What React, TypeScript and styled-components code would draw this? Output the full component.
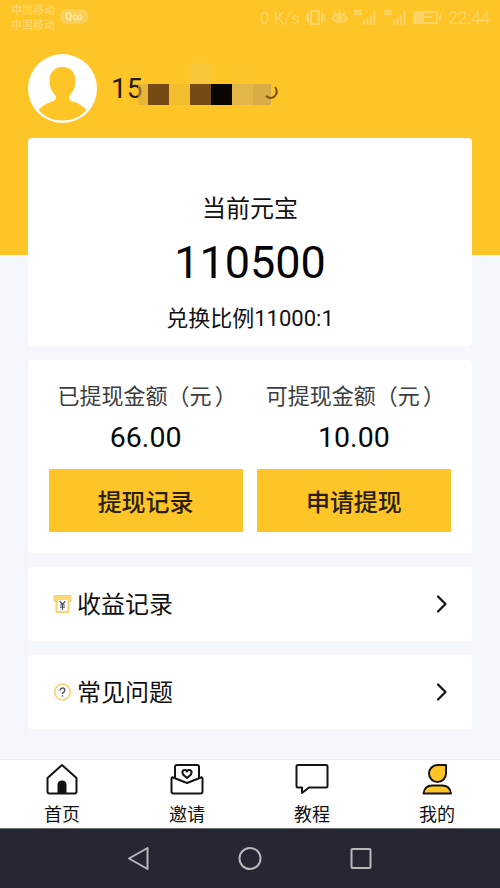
import React from "react";
import styled, { createGlobalStyle, css } from "styled-components";

const YELLOW = "#ffc425";
const PALE = "#fbd468";

const GlobalStyle = createGlobalStyle`
  * { box-sizing: border-box; }
  body {
    margin: 0;
    background: #f4f7fc;
    font-family: Roboto, "Noto Sans CJK SC", sans-serif;
    color: #111;
  }
`;

const Screen = styled.div`
  width: 500px;
  height: 888px;
  display: flex;
  flex-direction: column;
  overflow: hidden;
  background: linear-gradient(${YELLOW} 0 255px, #f4f7fc 255px);
`;

const StatusBar = styled.div`
  height: 36px;
  flex: none;
  display: flex;
  align-items: center;
  justify-content: space-between;
  padding: 0 10px 1px 11px;
  color: ${PALE};
`;

const StatusGroup = styled.div<{ $gap: number }>`
  display: flex;
  align-items: center;
  gap: ${(p) => p.$gap}px;
  filter: blur(0.7px);
`;

const Carriers = styled.div`
  font-size: 11px;
  font-weight: 700;
  line-height: 15px;
  white-space: nowrap;
`;

const CarrierPill = styled.span`
  width: 28px;
  height: 15px;
  margin: 0 0 3px -3px;
  border-radius: 7px;
  background: #fbd05a;
  color: #ffe9ab;
  font-size: 10px;
  font-weight: 700;
  line-height: 15px;
  text-align: center;
`;

const StatusText = styled.span<{ $spacing: number; $size: number }>`
  font-size: ${(p) => p.$size}px;
  line-height: 18px;
  letter-spacing: ${(p) => p.$spacing}px;
  white-space: nowrap;
`;

const Profile = styled.div`
  height: 102px;
  flex: none;
  display: flex;
  align-items: flex-start;
  padding: 17px 28px 0 27px;
`;

const Account = styled.div`
  display: flex;
  align-items: flex-end;
  height: 52px;
  margin-left: 13px;
`;

const Phone = styled.span`
  width: 27px;
  font-size: 28px;
  line-height: 32px;
  white-space: nowrap;
  color: #231a08;
`;

const Mosaic = styled.svg`
  width: 143px;
  height: 42px;
  position: relative;
`;

const Content = styled.main`
  flex: 1;
  display: flex;
  flex-direction: column;
  padding: 0 28px;
`;

const Card = styled.section`
  background: #fff;
  border-radius: 4px;
  margin-bottom: 14px;
  flex: none;
`;

const BalanceCard = styled(Card)`
  height: 207.5px;
  padding-top: 53px;
  display: flex;
  flex-direction: column;
  align-items: center;
`;

const BalanceTitle = styled.div`
  font-size: 24px;
  line-height: 36px;
`;

const BalanceValue = styled.div`
  font-size: 45px;
  line-height: 54px;
  margin-top: 9px;
  color: #050505;
`;

const Ratio = styled.div`
  font-size: 22px;
  line-height: 34px;
  margin-top: 12px;
`;

const WithdrawCard = styled(Card)`
  height: 193px;
  padding: 20px 21px 0 20.5px;
  display: grid;
  grid-template-columns: 1fr 1fr;
  column-gap: 14px;
`;

const Amount = styled.div`
  display: flex;
  flex-direction: column;
  align-items: center;
`;

const AmountLabel = styled.div`
  font-size: 22px;
  line-height: 34px;
  color: #3d3d3d;
  white-space: nowrap;
`;

const ClosingBracket = styled.span`
  margin: 0 -3px 0 3px;
`;

const AmountValue = styled.div`
  font-size: 28.5px;
  line-height: 36px;
  margin: 6px 0 13.5px;
  color: #080808;
`;

const ActionButton = styled.button`
  width: 100%;
  height: 62.5px;
  border: 0;
  border-radius: 1px;
  padding: 0;
  background: ${YELLOW};
  font: 500 24px Roboto, "Noto Sans CJK SC", sans-serif;
  color: #2a1e0c;
`;

const MenuRow = styled(Card)`
  height: 74px;
  display: flex;
  align-items: center;
  padding: 0 24px 0 25px;
`;

const MenuText = styled.span`
  flex: 1;
  margin-left: 5px;
  padding-top: 2px;
  font-size: 24px;
  line-height: 36px;
`;

const TabBar = styled.nav`
  height: 69px;
  flex: none;
  display: grid;
  grid-template-columns: repeat(4, 1fr);
  background: #fff;
  border-top: 1px solid #e9ecef;
`;

const Tab = styled.div`
  display: flex;
  flex-direction: column;
  align-items: center;
  padding: 2px 1px 0 0;
  font-size: 18px;
  line-height: 26px;

  svg {
    margin-bottom: 6px;
  }
`;

const SystemBar = styled.div`
  height: 60px;
  flex: none;
  display: flex;
  justify-content: center;
  gap: 83px;
  padding-top: 16px;
  background: #252833;
  border-top: 1px solid #6c6d70;
`;

const iconSize = css<{ $w: number; $h: number }>`
  width: ${(p) => p.$w}px;
  height: ${(p) => p.$h}px;
`;

const Icon = styled.svg<{ $w: number; $h: number }>`
  ${iconSize}
  flex: none;
  display: block;
  fill: none;
  stroke: #141414;
  stroke-width: 2;
  stroke-linejoin: round;
  stroke-linecap: round;
`;

const Avatar = () => (
  <Icon $w={71} $h={71} viewBox="0 0 71 71">
    <circle cx="35.5" cy="35.5" r="34.5" fill="#fff" stroke="none" />
    <path
      d="M35.500 14c8 0 13 5.500 13 13.500 0 6-2 11-5.500 14.500-2.500 3 0 6 4 7 5 1.400 9.500 4.500 12.500 8C53 64.500 45 67.500 35.500 67.500S18 64.500 11.500 57c3-3.500 7.500-6.600 12.500-8 4-1 6.500-4 4-7-3.500-3.500-5.500-8.500-5.500-14.500 0-8 5-13.500 13-13.500z"
      fill={YELLOW}
      stroke="none"
    />
  </Icon>
);

const Signal = () => (
  <Icon $w={24} $h={17} viewBox="0 0 24 17">
    <path d="M2 2h6M2 5h6" stroke={PALE} strokeWidth="2.500" />
    <path d="M11 15v-3M14.500 15V10M18 15V7M21.500 15V3" stroke={PALE} strokeWidth="2.200" />
  </Icon>
);

const Chevron = () => (
  <Icon $w={12} $h={18} viewBox="0 0 12 18">
    <path d="M2 1.500l7.500 7.500L2 16.500" strokeWidth="2.200" />
  </Icon>
);

const mosaicBlocks = [
  { x: 0, y: 21, w: 10, fill: "#d9ac43" },
  { x: 10, y: 21, w: 21, fill: "#744c13" },
  { x: 31, y: 21, w: 21, fill: "#f4bd2c" },
  { x: 52, y: 21, w: 21, fill: "#744c13" },
  { x: 73, y: 21, w: 21, fill: "#090603" },
  { x: 94, y: 21, w: 21, fill: "#e2b648" },
  { x: 115, y: 21, w: 18, fill: "#d8ad45" },
  { x: 52, y: 0, w: 21, fill: "#f9c53a" },
  { x: 94, y: 0, w: 21, fill: "#fdc42c" },
];

export default function App() {
  return (
    <Screen>
      <GlobalStyle />
      <StatusBar>
        <StatusGroup $gap={8}>
          <Carriers>
            中国移动
            <br />
            中国移动
          </Carriers>
          <CarrierPill>Q∞</CarrierPill>
        </StatusGroup>
        <StatusGroup $gap={5.5}>
          <StatusText $size={17} $spacing={0}>0 K/s</StatusText>
          <Icon $w={20} $h={17} viewBox="0 0 20 17">
            <path d="M6 2h8v13H6zM3 4v9M17 4v9M.8 6.500v4M19.200 6.500v4" stroke={PALE} />
          </Icon>
          <Icon $w={17} $h={17} viewBox="0 0 17 17">
            <path d="M1 9q7.500-8 15 0-7.500 8-15 0zM8.500 1v2M3 3l1 1.500M14 3l-1 1.500" stroke={PALE} />
            <circle cx="8.500" cy="9" r="2" fill={PALE} stroke={PALE} />
          </Icon>
          <Signal />
          <Signal />
          <Icon $w={30} $h={15} viewBox="-1 0 30 15">
            <path d="M1 2h23v11H1zM27 5v5" stroke={PALE} />
            <path d="M2 3h9v9H2z" fill={PALE} stroke="none" />
            <path d="M12 7h6" stroke={PALE} />
          </Icon>
          <StatusText $size={17.5} $spacing={-0.3}>22:44</StatusText>
        </StatusGroup>
      </StatusBar>

      <Profile>
        <Avatar />
        <Account>
          <Phone>15</Phone>
          <Mosaic viewBox="0 0 143 42">
            {mosaicBlocks.map((b) => (
              <rect
                key={`${b.x}-${b.y}`}
                x={b.x}
                y={b.y}
                width={b.w}
                height="21"
                fill={b.fill}
                fillOpacity={b.x === 0 ? 0.6 : 1}
              />
            ))}
            <path d="M128 33q5 4 9 0 3.500-4.500 0-9" fill="none" stroke="#795216" strokeWidth="2" />
          </Mosaic>
        </Account>
      </Profile>

      <Content>
        <BalanceCard>
          <BalanceTitle>当前元宝</BalanceTitle>
          <BalanceValue>110500</BalanceValue>
          <Ratio>兑换比例11000:1</Ratio>
        </BalanceCard>

        <WithdrawCard>
          <Amount>
            <AmountLabel>
              已提现金额（元<ClosingBracket>）</ClosingBracket>
            </AmountLabel>
            <AmountValue>66.00</AmountValue>
            <ActionButton>提现记录</ActionButton>
          </Amount>
          <Amount>
            <AmountLabel>
              可提现金额（元<ClosingBracket>）</ClosingBracket>
            </AmountLabel>
            <AmountValue>10.00</AmountValue>
            <ActionButton>申请提现</ActionButton>
          </Amount>
        </WithdrawCard>

        <MenuRow>
          <Icon $w={19} $h={20} viewBox="0 0 19 20">
            <path d="M1.500 2h16v5h-2v11h-12V7h-2z" stroke="#f8d26b" />
            <path d="M2 2h15v4H2z" fill="#fbd978" stroke="none" />
            <path d="M7 7.500l2.500 3 2.500-3M9.500 10.500v5M7.500 11h4M7.500 13.200h4" stroke="#55586a" strokeWidth="1.200" />
          </Icon>
          <MenuText>收益记录</MenuText>
          <Chevron />
        </MenuRow>
        <MenuRow>
          <Icon $w={19} $h={20} viewBox="0 0 19 20">
            <circle cx="9.5" cy="10" r="7.8" stroke="#f8d26b" strokeWidth="1.700" />
            <path d="M7.300 8q.3-2 2.300-2t2.200 1.900-2.300 3.400M9.500 13.800v.1" stroke="#55586a" strokeWidth="1.600" />
          </Icon>
          <MenuText>常见问题</MenuText>
          <Chevron />
        </MenuRow>
      </Content>

      <TabBar>
        <Tab>
          <Icon $w={34} $h={34} viewBox="0 0 34 34">
            <path d="M17 3L2.500 16v13.500q0 2 2 2h25q2 0 2-2V16z" />
            <path d="M13.500 31V23q0-3.500 3.500-3.500t3.500 3.500v8z" fill="#111" />
          </Icon>
          首页
        </Tab>
        <Tab>
          <Icon $w={34} $h={34} viewBox="0 0 34 34">
            <path d="M5 16V5q0-2 2-2h20q2 0 2 2v11" />
            <path d="M3 15.500q-1.500-.5-1.500 1v13q0 2 2 2h27q2 0 2-2v-13q0-1.500-1.500-1L17 21z" />
            <path d="M17 16l-4-3.600c-2-4.300 2.500-6 4-2.900 1.500-3.100 6-1.400 4 2.900z" />
          </Icon>
          邀请
        </Tab>
        <Tab>
          <Icon $w={34} $h={34} viewBox="0 0 34 34">
            <path d="M3 3h28q1.500 0 1.500 1.500V24q0 1.500-1.500 1.500H14l-7 5.500v-5.500H3q-1.500 0-1.500-1.500V4.500Q1.500 3 3 3z" />
          </Icon>
          教程
        </Tab>
        <Tab>
          <Icon $w={34} $h={34} viewBox="0 0 34 34">
            <path d="M17.500 3h8.500v8.500a8.500 8.500 0 1 1-8.500-8.500z" fill={YELLOW} />
            <path d="M3.500 31.500q1-8 9-8h9.500q8 0 9 8z" fill={YELLOW} />
          </Icon>
          我的
        </Tab>
      </TabBar>

      <SystemBar>
        <Icon $w={28} $h={28} viewBox="0 0 28 28">
          <path d="M4 13.500L22.500 3v21z" stroke="#b7b8ba" />
        </Icon>
        <Icon $w={28} $h={28} viewBox="0 0 28 28">
          <circle cx="14" cy="13.5" r="10.5" stroke="#b7b8ba" />
        </Icon>
        <Icon $w={28} $h={28} viewBox="0 0 28 28">
          <rect x="4.5" y="4" width="19" height="19" rx="1" stroke="#b7b8ba" />
        </Icon>
      </SystemBar>
    </Screen>
  );
}
